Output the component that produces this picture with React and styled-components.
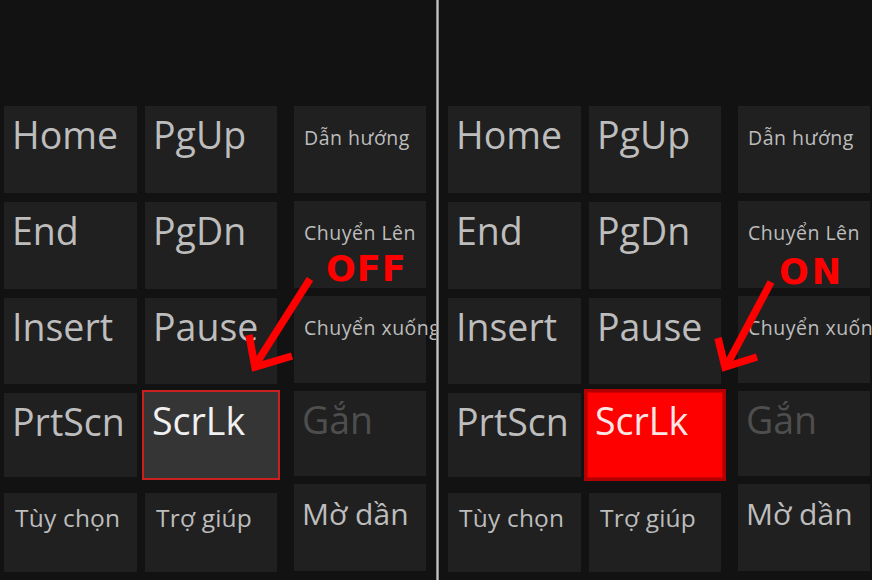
import React from "react";
import styled, { createGlobalStyle, css } from "styled-components";

const Global = createGlobalStyle`
  html, body { margin: 0; padding: 0; background: #121212; }
  body { overflow: hidden; font-family: "Open Sans", "Noto Sans", sans-serif; }
`;

const Screen = styled.div`
  position: relative;
  display: flex;
  width: 872px;
  height: 580px;
  overflow: hidden;
  background: #121212;
`;

const Panel = styled.div`
  flex: 0 0 ${(p) => p.$width}px;
  box-sizing: border-box;
  padding: 106px 0 0 ${(p) => p.$inset}px;
  overflow: hidden;
`;

const Divider = styled.div`
  flex: 0 0 3px;
  background: linear-gradient(90deg, #6e6e6e, #c4c4c4 50%, #6e6e6e);
`;

const Board = styled.div`
  display: flex;
  align-items: flex-start;
`;

const KeyGrid = styled.div`
  display: grid;
  grid-template-columns: 133px 132px;
  grid-template-rows: 87px 87px 86px 84px 86px;
  column-gap: 8px;
  row-gap: 9px;
  flex-shrink: 0;
`;

const SideColumn = styled.div`
  display: grid;
  grid-template-columns: 132px;
  grid-template-rows: 87px 87px 87px 85px 87px;
  row-gap: 8px;
  margin-left: 17px;
  flex-shrink: 0;
`;

const sizes = {
  xl: css`font-size: 37.5px; padding: 6px 0 0 8px;`,
  lg: css`font-size: 30px; padding: 12px 0 0 8px;`,
  md: css`font-size: 24.5px; padding: 10px 0 0 11px; letter-spacing: 0.2px;`,
  sm: css`font-size: 19.5px; padding: 20px 0 0 10px; letter-spacing: 0.5px;`,
};

const states = {
  normal: css`background: #202020; color: #bdbdbd;`,
  dim: css`background: #202020; color: #4e4e4e;`,
  off: css`
    background: #353535;
    color: #f0f0f0;
    box-shadow: 0 0 0 2px #c9201f;
    margin: -1px;
  `,
  on: css`
    background: #ff0000;
    color: #fbe6e6;
    box-shadow: 0 0 0 3px #b00000, inset 0 0 0 1px #d40000;
    margin: -1px -2px;
  `,
};

const Tile = styled.div`
  box-sizing: border-box;
  line-height: 1.2;
  white-space: nowrap;
  font-family: "Open Sans", "Noto Sans", sans-serif;
  ${(p) => sizes[p.$size || "xl"]}
  ${(p) => states[p.$state || "normal"]}
  ${(p) => p.$short && css`height: 79px; align-self: end;`}
`;

const Overlay = styled.div`
  position: absolute;
  inset: 0;
  pointer-events: none;
`;

const Tag = styled.span`
  position: absolute;
  left: ${(p) => p.$x}px;
  top: ${(p) => p.$y}px;
  font-family: "DejaVu Sans", "Liberation Sans", sans-serif;
  font-weight: 700;
  font-size: 35px;
  line-height: 1;
  color: #ff0000;
  letter-spacing: ${(p) => p.$spacing}px;
`;

const ArrowSvg = styled.svg`
  position: absolute;
  left: 0;
  top: 0;
`;

function Keyboard({ scr }) {
  return (
    <Board>
      <KeyGrid>
        <Tile>Home</Tile>
        <Tile>PgUp</Tile>
        <Tile>End</Tile>
        <Tile>PgDn</Tile>
        <Tile>Insert</Tile>
        <Tile>Pause</Tile>
        <Tile>PrtScn</Tile>
        <Tile $state={scr}>ScrLk</Tile>
        <Tile $size="md" $short>Tùy chọn</Tile>
        <Tile $size="md" $short>Trợ giúp</Tile>
      </KeyGrid>
      <SideColumn>
        <Tile $size="sm">Dẫn hướng</Tile>
        <Tile $size="sm">Chuyển Lên</Tile>
        <Tile $size="sm">Chuyển xuống</Tile>
        <Tile $state="dim">Gắn</Tile>
        <Tile $size="lg">Mờ dần</Tile>
      </SideColumn>
    </Board>
  );
}

export default function App() {
  return (
    <>
      <Global />
      <Screen>
        <Panel $width={436} $inset={4}>
          <Keyboard scr="off" />
        </Panel>
        <Divider />
        <Panel $width={433} $inset={9}>
          <Keyboard scr="on" />
        </Panel>
        <Overlay>
          <ArrowSvg width="872" height="580" viewBox="0 0 872 580">
            <g stroke="#ff0000" strokeWidth="7.5" fill="none" strokeLinejoin="miter">
              <line x1="310" y1="279" x2="256" y2="364" />
              <polyline points="249,335 255,367 292,356" />
              <line x1="771" y1="282" x2="728" y2="363" />
              <polyline points="718,338 725,367 757,357" />
            </g>
          </ArrowSvg>
          <Tag $x={326} $y={252} $spacing={1}>OFF</Tag>
          <Tag $x={779} $y={255} $spacing={3}>ON</Tag>
        </Overlay>
      </Screen>
    </>
  );
}
